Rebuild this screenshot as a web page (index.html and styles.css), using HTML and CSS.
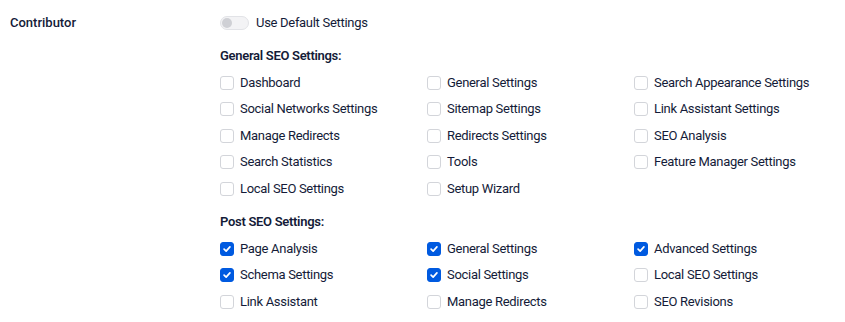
FILE: index.html
```html
<!DOCTYPE html>
<html>
<head>
  <title>Access Control</title>
  <link rel="stylesheet" href="styles.css">
</head>
<body>
  <div class="role-row">
    <div class="role-name">Contributor</div>
    <div class="role-settings">
      <label class="toggle-line">
        <span class="toggle"><span class="knob"></span></span>
        Use Default Settings
      </label>

      <div class="group-title">General SEO Settings:</div>
      <div class="options">
        <label class="option"><span class="box"></span>Dashboard</label>
        <label class="option"><span class="box"></span>General Settings</label>
        <label class="option"><span class="box"></span>Search Appearance Settings</label>
        <label class="option"><span class="box"></span>Social Networks Settings</label>
        <label class="option"><span class="box"></span>Sitemap Settings</label>
        <label class="option"><span class="box"></span>Link Assistant Settings</label>
        <label class="option"><span class="box"></span>Manage Redirects</label>
        <label class="option"><span class="box"></span>Redirects Settings</label>
        <label class="option"><span class="box"></span>SEO Analysis</label>
        <label class="option"><span class="box"></span>Search Statistics</label>
        <label class="option"><span class="box"></span>Tools</label>
        <label class="option"><span class="box"></span>Feature Manager Settings</label>
        <label class="option"><span class="box"></span>Local SEO Settings</label>
        <label class="option"><span class="box"></span>Setup Wizard</label>
      </div>

      <div class="group-title">Post SEO Settings:</div>
      <div class="options">
        <label class="option"><span class="box checked"><svg viewBox="0 0 14 14"><path d="M3.6 7.2 L6 9.4 L10.4 4.6" /></svg></span>Page Analysis</label>
        <label class="option"><span class="box checked"><svg viewBox="0 0 14 14"><path d="M3.6 7.2 L6 9.4 L10.4 4.6" /></svg></span>General Settings</label>
        <label class="option"><span class="box checked"><svg viewBox="0 0 14 14"><path d="M3.6 7.2 L6 9.4 L10.4 4.6" /></svg></span>Advanced Settings</label>
        <label class="option"><span class="box checked"><svg viewBox="0 0 14 14"><path d="M3.6 7.2 L6 9.4 L10.4 4.6" /></svg></span>Schema Settings</label>
        <label class="option"><span class="box checked"><svg viewBox="0 0 14 14"><path d="M3.6 7.2 L6 9.4 L10.4 4.6" /></svg></span>Social Settings</label>
        <label class="option"><span class="box"></span>Local SEO Settings</label>
        <label class="option"><span class="box"></span>Link Assistant</label>
        <label class="option"><span class="box"></span>Manage Redirects</label>
        <label class="option"><span class="box"></span>SEO Revisions</label>
      </div>
    </div>
  </div>
</body>
</html>
```

FILE: styles.css
```css
body {
  font-family: Roboto, "Noto Sans", sans-serif;
  font-size: 13px;
  letter-spacing: -0.3px;
  color: #141b38;
  margin: 0;
  padding: 0;
  background-color: #fff;
}

.role-row {
  display: flex;
  padding-top: 14px;
}

.role-name {
  width: 210px;
  padding-left: 10px;
  line-height: 18px;
  font-weight: 500;
  letter-spacing: 0;
}

.role-settings {
  flex: 1;
}

.toggle-line {
  display: flex;
  align-items: center;
  gap: 7px;
  line-height: 18px;
}

.toggle {
  display: inline-flex;
  align-items: center;
  width: 25px;
  height: 12px;
  padding: 0 1px;
  border: 1px solid #e2e3e7;
  border-radius: 8px;
  background-color: #f3f3f5;
}

.knob {
  width: 10px;
  height: 10px;
  border-radius: 50%;
  background-color: #cfd0d5;
}

.group-title {
  font-weight: 600;
  line-height: 18px;
  margin-top: 15px;
  margin-bottom: 8.6px;
}

.options {
  display: grid;
  grid-template-columns: 207px 207px 1fr;
  row-gap: 8.6px;
}

.option {
  display: flex;
  align-items: center;
  gap: 6px;
  line-height: 18px;
}

.box {
  box-sizing: border-box;
  width: 14px;
  height: 14px;
  border: 1px solid #d3d5da;
  border-radius: 3px;
  background-color: #fff;
  display: flex;
}

.box.checked {
  background-color: #005ae0;
  border-color: #005ae0;
}

.box svg {
  width: 12px;
  height: 12px;
  fill: none;
  stroke: #fff;
  stroke-width: 2;
  stroke-linecap: round;
  stroke-linejoin: round;
}
```
